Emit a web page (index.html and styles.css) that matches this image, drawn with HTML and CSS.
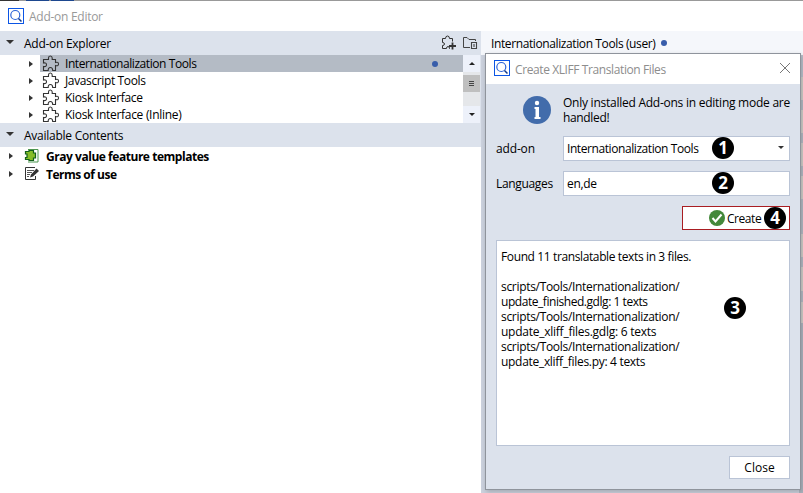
FILE: index.html
```html
<!DOCTYPE html>
<html lang="en">
<head>
<meta charset="utf-8">
<title>Add-on Editor</title>
<link rel="stylesheet" href="styles.css">
</head>
<body>
<svg class="defs" width="0" height="0">
  <symbol id="puzzle" viewBox="0 0 18 18">
    <path d="M1.500 4.500H6.500V3Q6.500 1 8.300 1T10.200 3V4.500H13.500V7.500Q16.500 6.500 16.500 9T13.500 10.500V15.500H10.700Q10.700 12.500 8.400 12.500T6.200 15.500H1.500V11.500Q4.500 12 4.500 9.700T1.500 8Z" fill="none" stroke="#333" stroke-width="1.100"/>
  </symbol>
  <symbol id="logo" viewBox="0 0 16 16">
    <rect x=".5" y=".5" width="15" height="15" fill="#fff" stroke="#0b55e5"/>
    <circle cx="7.300" cy="7" r="4.500" fill="none" stroke="#2c64d8" stroke-width="1.200"/>
    <path d="M10.500 10.500l3 3" stroke="#123a8c" stroke-width="1.500"/>
  </symbol>
</svg>
<div class="app">
  <div class="topline"><i class="dark"></i><i class="tab"></i><i class="tab two"></i></div>
  <header class="titlebar"><svg class="logo"><use href="#logo"/></svg><span class="t-editor">Add-on Editor</span></header>
  <div class="main">
    <div class="left">
      <div class="section"><i class="down"></i><span class="t-explorer">Add-on Explorer</span>
        <div class="tools">
          <svg width="16" height="16" viewBox="0 0 16 16" fill="none" stroke="#333"><path d="M9 13.500H8.500Q8.500 11.500 7 11.500T5.500 13.500H1.500V10.500Q3.500 10.500 3.500 9T1.500 7.500V3.500H4.500Q4.500 1 6.500 1T8.500 3.500H11.500V6.500"/><path d="M11.500 7.500v7M8 11h7" stroke-width="1.800"/></svg>
          <svg width="16" height="16" viewBox="0 0 16 16" fill="none" stroke="#444"><path d="M8 12.500H1.500V2.500H5L7 4.500H13.500V6"/><path d="M9.500 7.500H14.500V13.500H9.500ZM12 9v3" stroke-width="1.100"/></svg>
        </div>
      </div>
      <div class="tree">
        <div class="rows">
          <div class="row selected"><i class="right"></i><div class="cell"><svg class="piece"><use href="#puzzle"/></svg><span class="t-intl">Internationalization Tools</span><i class="dot"></i></div></div>
          <div class="row"><i class="right"></i><div class="cell"><svg class="piece"><use href="#puzzle"/></svg><span class="t-js">Javascript Tools</span></div></div>
          <div class="row"><i class="right"></i><div class="cell"><svg class="piece"><use href="#puzzle"/></svg><span class="t-kiosk">Kiosk Interface</span></div></div>
          <div class="row"><i class="right"></i><div class="cell"><svg class="piece"><use href="#puzzle"/></svg><span class="t-inline">Kiosk Interface (Inline)</span></div></div>
        </div>
        <div class="scroll"><div class="btn"><i class="up"></i></div><div class="track"><div class="thumb"><i></i><i></i><i></i></div></div><div class="btn"><i class="dn"></i></div></div>
      </div>
      <div class="section"><i class="down"></i><span class="t-contents">Available Contents</span></div>
      <div class="contents">
        <div class="item"><i class="right"></i><svg width="16" height="16" viewBox="0 0 16 16"><path d="M4 1.500H14V14H4" fill="none" stroke="#4d9650"/><path d="M1.500 3.500H5V2.500H9.500V5H11.500V10H9.500V12.500H5V11.500H1.500V9.500H3V6H1.500Z" fill="#86bd28" stroke="#12601a" stroke-width="1.200"/></svg><span class="t-gray">Gray value feature templates</span></div>
        <div class="item"><i class="right"></i><svg width="16" height="16" viewBox="0 0 16 16"><path d="M11 1.500H1.500V13.500H11.500V10" fill="none" stroke="#333"/><path d="M3 4.500h7M3 6.500h5M3 8.500h3M3 10.500h2" stroke="#555"/><path d="M6 11.500L7 8.500L12.500 2.500L15 5L9 10.500Z" fill="#333"/></svg><span class="t-terms">Terms of use</span></div>
      </div>
    </div>
    <div class="right-pane"><div class="tabhead"><span class="t-user">Internationalization Tools (user)</span><i class="dot"></i></div><div class="behind"></div></div>
  </div>
</div>
<div class="dialog">
  <header class="dlg-title"><svg class="logo"><use href="#logo"/></svg><span class="t-create-title">Create XLIFF Translation Files</span><svg class="x" width="12" height="12" viewBox="0 0 12 12"><path d="M1 1l10 10M11 1L1 11" stroke="#777" stroke-width="1"/></svg></header>
  <div class="dlg-body">
    <div class="info"><svg width="28" height="28" viewBox="0 0 28 28"><circle cx="14" cy="14" r="14" fill="#426cab"/><circle cx="14" cy="7" r="2.200" fill="#fff"/><path d="M11.500 11H16V21H17.500V23H11.500V21H12.500V13H11.500Z" fill="#fff"/></svg>
      <div class="msg"><div><span class="t-only">Only installed Add-ons in editing mode are</span></div><div><span class="t-handled">handled!</span></div></div></div>
    <div class="field"><label class="t-label1">add-on</label><div class="box"><span class="t-intl">Internationalization Tools</span><i class="caret"></i><b class="badge b1">1</b></div></div>
    <div class="field"><label class="t-label2">Languages</label><div class="box"><span class="t-en">en,de</span><b class="badge b2">2</b></div></div>
    <div class="create"><svg width="16" height="16" viewBox="0 0 16 16"><circle cx="8" cy="8" r="8" fill="#43883a"/><path d="M3.500 8l3 3.500L12.500 4.500" fill="none" stroke="#fff" stroke-width="2"/></svg><span class="t-create">Create</span><b class="badge b4">4</b></div>
    <div class="log">
      <p><span class="t-found">Found 11 translatable texts in 3 files.</span></p><p>&nbsp;</p>
      <p><span class="t-path">scripts/Tools/Internationalization/</span></p><p><span class="t-u1">update_finished.gdlg: 1 texts</span></p>
      <p><span class="t-path">scripts/Tools/Internationalization/</span></p><p><span class="t-u2">update_xliff_files.gdlg: 6 texts</span></p>
      <p><span class="t-path">scripts/Tools/Internationalization/</span></p><p><span class="t-u3">update_xliff_files.py: 4 texts</span></p>
      <b class="badge b3">3</b>
    </div>
    <div class="close"><span class="t-close">Close</span></div>
  </div>
</div>
</body>
</html>
```
FILE: styles.css
```css
* { box-sizing: border-box; }
body { margin: 0; width: 803px; height: 493px; overflow: hidden; background: #fff; color: #000; font: 12px/15px "Open Sans", "Noto Sans", sans-serif; white-space: nowrap; }
p { margin: 0; }
i { display: block; flex: none; }
svg { flex: none; }
.defs { position: absolute; }
.app { height: 493px; display: flex; flex-direction: column; }
.topline { height: 1px; background: #999; display: flex; }
.dark { width: 19px; height: 1px; background: #333; margin-right: 7px; }
.tab { width: 23px; height: 1px; background: #1d478f; margin-right: 2px; }
.logo { width: 16px; height: 16px; }
.titlebar { height: 30px; display: flex; align-items: center; gap: 5px; padding-left: 8px; color: #999; }
.main { display: flex; flex: 1; }
.left { width: 481px; }
.section { height: 24px; background: #dce2ec; display: flex; align-items: center; padding-left: 6px; gap: 10px; }
.down { border: 4px solid transparent; border-top-color: #333; border-bottom: 0; margin-top: -2px; }
.tools { display: flex; gap: 5px; margin-left: auto; padding-right: 3px; }
.tree { display: flex; height: 68px; }
.rows { width: 463px; }
.row { height: 17px; display: flex; align-items: center; padding-left: 29px; }
.right { border: 3px solid transparent; border-left: 4px solid #333; border-right: 0; width: 4px; margin-right: 7px; }
.cell { flex: 1; height: 17px; padding-left: 2px; display: flex; align-items: center; gap: 5px; }
.selected .cell { background: #b4bbc5; }
.piece { width: 18px; height: 18px; }
.dot { width: 6px; height: 6px; border-radius: 50%; background: #385daa; }
.cell .dot { margin-left: auto; margin-right: 25px; }
.scroll { width: 18px; background: #dce2ec; padding-right: 1px; display: flex; flex-direction: column; }
.btn { height: 17px; background: #edf1fa; display: flex; justify-content: center; align-items: center; }
.track { flex: 1; background: #e5e7ea; padding-top: 3px; }
.thumb { height: 17px; background: #bfbfbf; display: flex; flex-direction: column; align-items: center; justify-content: center; gap: 1px; }
.thumb i { width: 5px; height: 1px; background: #444; }
.up { border: 3px solid transparent; border-bottom-color: #222; border-top: 0; }
.dn { border: 3px solid transparent; border-top-color: #222; border-bottom: 0; }
.contents { font-weight: 700; }
.item { height: 18px; display: flex; align-items: center; padding-left: 9px; }
.item .right { margin-right: 11px; }
.item svg { margin-right: 6px; }
.right-pane { flex: 1; background: #ccd2de; display: flex; flex-direction: column; }
.tabhead { height: 24px; background: #f5f7fb; display: flex; align-items: center; gap: 6px; padding-left: 10px; }
/* form rows showing past the dialog's right edge */
.behind { flex: 1; margin-left: auto; width: 4px; background: linear-gradient(#b9c0cb 22px, #cfccc8 22px 45px, #b3b9c3 45px 55px, #cfccc8 55px 78px, #b3b9c3 78px 88px, #cfccc8 88px 111px, #b3b9c3 111px 121px, #cfccc8 121px 144px, #b3b9c3 144px 179px, #cfccc8 179px 202px, #b3b9c3 202px 212px, #cfccc8 212px 236px, #b3b9c3 236px 247px, #cfccc8 247px 268px, #adb4bf 268px); }
.dialog { position: absolute; left: 485px; top: 53px; width: 316px; height: 437px; border: 1px solid #8f949c; background: #dce2ec; box-shadow: 1px 2px 5px #0003; display: flex; flex-direction: column; }
.dlg-title { height: 30px; background: #fff; display: flex; align-items: center; gap: 5px; padding: 0 9px 2px 8px; color: #8d8d8d; }
.t-create-title { margin-top: 2px; }
.x { margin-left: auto; }
.dlg-body { padding: 12px 10px 10px; display: flex; flex-direction: column; }
.info { height: 40px; display: flex; gap: 12px; padding-left: 27px; }
.msg { margin-top: -1px; }
.field { display: flex; height: 25px; align-items: center; margin-bottom: 10px; }
.field label { flex: 0 0 67px; }
.box { flex: 1; height: 25px; border: 1px solid #bac4d6; background: #fff; position: relative; display: flex; align-items: center; padding-left: 3px; }
.caret { border: 3px solid transparent; border-top-color: #333; border-bottom: 0; margin-left: auto; margin-right: 5px; margin-top: -2px; }
.badge { position: absolute; width: 22px; height: 22px; border-radius: 50%; background: #000; color: #fff; font: 700 17px/22px "Open Sans", sans-serif; text-align: center; }
.b1, .b2 { left: 148px; top: 0; }
.create { align-self: flex-end; width: 108px; height: 24px; border: 1px solid #a91d22; background: #fff; position: relative; display: flex; align-items: center; gap: 2px; padding-left: 26px; }
.b4 { left: 81px; top: 0; }
.log { height: 206px; margin-top: 10px; border: 1px solid #bac4d6; background: #fff; padding: 8px 4px; position: relative; }
.b3 { left: 227px; top: 56px; }
.close { align-self: flex-end; width: 61px; height: 23px; margin-top: 10px; border: 1px solid #bac4d6; background: #fff; display: flex; align-items: center; justify-content: center; }
/* per-label tracking */
.t-editor { letter-spacing: -.27px; }
.t-explorer { letter-spacing: -.27px; }
.t-intl { letter-spacing: -.42px; }
.t-js { letter-spacing: -.37px; }
.t-kiosk { letter-spacing: -.33px; }
.t-inline { letter-spacing: -.3px; }
.t-contents { letter-spacing: -.25px; }
.t-gray { letter-spacing: -.46px; }
.t-terms { letter-spacing: -.5px; }
.t-user { letter-spacing: -.39px; }
.t-create-title { letter-spacing: -.4px; }
.t-only { letter-spacing: -.25px; }
.t-handled { letter-spacing: -.35px; }
.t-label1 { letter-spacing: -.15px; }
.t-label2 { letter-spacing: -.33px; }
.t-en { letter-spacing: -.3px; }
.t-create { letter-spacing: -.45px; }
.t-found { letter-spacing: -.38px; }
.t-path { letter-spacing: -.31px; }
.t-u1 { letter-spacing: -.45px; }
.t-u2 { letter-spacing: -.25px; }
.t-u3 { letter-spacing: -.3px; }
```
